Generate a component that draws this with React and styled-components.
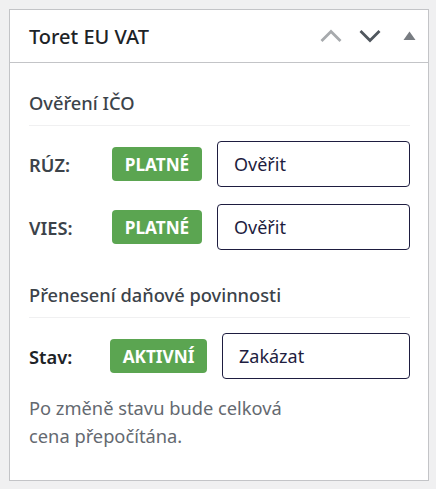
import React from "react";
import styled, { createGlobalStyle } from "styled-components";

const GlobalStyle = createGlobalStyle`
  body {
    margin: 0;
    background: #f0f0f1;
    font-family: "Noto Sans", "Open Sans", sans-serif;
  }
`;

const rows = [
  { id: "ruz", label: "RÚZ:", status: "PLATNÉ", action: "Ověřit" },
  { id: "vies", label: "VIES:", status: "PLATNÉ", action: "Ověřit" },
];

const App = () => {
  return (
    <Page>
      <GlobalStyle />
      <Box>
        <Header>
          <Title>Toret EU VAT</Title>
          <Controls>
            <IconButton tone="#a7aaad">
              <svg width="22" height="14" viewBox="0 0 22 14">
                <path d="M1.5 12 L11 2.5 L20.5 12" fill="none" stroke="currentColor" strokeWidth="2.8" />
              </svg>
            </IconButton>
            <IconButton tone="#50575e">
              <svg width="22" height="14" viewBox="0 0 22 14">
                <path d="M1.5 2 L11 11.5 L20.5 2" fill="none" stroke="currentColor" strokeWidth="2.8" />
              </svg>
            </IconButton>
            <IconButton tone="#787c82" wide>
              <svg width="13" height="10" viewBox="0 0 13 10">
                <path d="M6.5 0.5 L12.5 9 L0.5 9 Z" fill="currentColor" />
              </svg>
            </IconButton>
          </Controls>
        </Header>
        <Body>
          <SectionTitle>Ověření IČO</SectionTitle>
          <Grid cols="68px 90px 1fr">
            {rows.map((row) => (
              <React.Fragment key={row.id}>
                <Label>{row.label}</Label>
                <Badge>{row.status}</Badge>
                <ActionButton>{row.action}</ActionButton>
              </React.Fragment>
            ))}
          </Grid>
          <SectionTitle spaced>Přenesení daňové povinnosti</SectionTitle>
          <Grid cols="66px 97px 1fr">
            <Label dark>Stav:</Label>
            <Badge>AKTIVNÍ</Badge>
            <ActionButton>Zakázat</ActionButton>
          </Grid>
          <Note>
            Po změně stavu bude celková
            <br />
            cena přepočítána.
          </Note>
        </Body>
      </Box>
    </Page>
  );
};

export default App;

const Page = styled.div`
  padding: 9px 7px 9px 9px;
`;

const Box = styled.div`
  background: #fff;
  border: 1px solid #c3c4c7;
  height: 472px;
  box-sizing: border-box;
`;

const Header = styled.div`
  display: flex;
  align-items: center;
  justify-content: space-between;
  height: 52px;
  padding: 0 12px 0 19px;
  border-bottom: 1px solid #c3c4c7;
`;

const Title = styled.h2`
  margin: 0;
  font-size: 20px;
  font-weight: 500;
  color: #1d2327;
`;

const Controls = styled.div`
  display: flex;
  align-items: center;
  gap: 17px;
`;

const IconButton = styled.span`
  display: flex;
  margin-left: ${(props) => (props.wide ? "5px" : "0")};
  color: ${(props) => props.tone};
`;

const Body = styled.div`
  padding: 27px 18px 0 19px;
`;

const SectionTitle = styled.h3`
  margin: ${(props) => (props.spaced ? "32px" : "0")} 0 0;
  padding-bottom: 10px;
  border-bottom: 1px solid #f0f0f1;
  font-size: 18.3px;
  font-weight: 500;
  color: #3c434a;
  line-height: 25px;
`;

const Grid = styled.div`
  display: grid;
  grid-template-columns: ${(props) => props.cols};
  column-gap: 15px;
  row-gap: 17px;
  align-items: center;
  margin-top: 15px;
`;

const Label = styled.span`
  font-size: 18.3px;
  font-weight: 600;
  color: ${(props) => (props.dark ? "#1d2327" : "#3c434a")};
`;

const Badge = styled.span`
  display: flex;
  align-items: center;
  justify-content: center;
  height: 34px;
  border-radius: 4px;
  background: #5ba551;
  color: #fff;
  font-size: 17.2px;
  font-weight: 700;
`;

const ActionButton = styled.button`
  height: 46px;
  padding: 0 16px;
  text-align: left;
  background: #fff;
  border: 1px solid #1e1d40;
  border-radius: 4px;
  font-family: inherit;
  font-size: 18px;
  color: #1e1d40;
`;

const Note = styled.p`
  margin: 15px 0 0;
  font-size: 18.3px;
  line-height: 28px;
  color: #646970;
`;
